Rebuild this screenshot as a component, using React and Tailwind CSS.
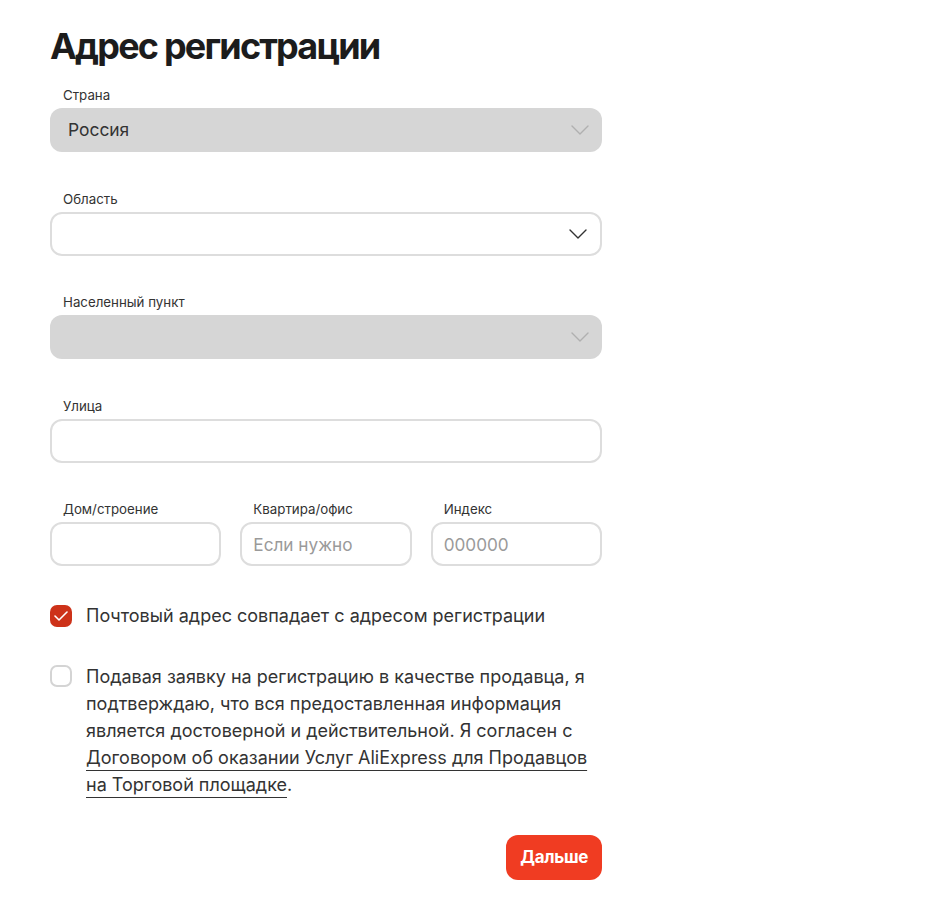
import React, { useState } from 'react';

const Chevron = ({ light }) => (
  <svg
    width="18"
    height="10"
    viewBox="0 0 18 10"
    fill="none"
    className="absolute right-[13px] top-1/2 -translate-y-1/2"
  >
    <path
      d="M1 1l8 8 8-8"
      stroke={light ? '#b0b0b0' : '#333333'}
      strokeWidth="1.4"
      strokeLinecap="round"
      strokeLinejoin="round"
    />
  </svg>
);

const Label = ({ children }) => (
  <div className="pl-[13px] text-[13.3px] leading-[18px] text-[#333] mb-[4px]">{children}</div>
);

const SelectField = ({ label, value, disabled, className }) => (
  <div className={className}>
    <Label>{label}</Label>
    <div
      className={
        disabled
          ? 'relative h-[44px] rounded-[12px] bg-[#d6d6d6] flex items-center px-[18px] text-[17.4px] text-[#333]'
          : 'relative h-[44px] rounded-[12px] border-2 border-[#dddddd] bg-white flex items-center px-[16px] text-[17.4px] text-[#333]'
      }
    >
      {value}
      <Chevron light={disabled} />
    </div>
  </div>
);

const TextField = ({ label, placeholder }) => (
  <div>
    <Label>{label}</Label>
    <input
      type="text"
      placeholder={placeholder}
      className="w-full h-[44px] rounded-[12px] border-2 border-[#dddddd] bg-white px-[11px] text-[17.2px] text-[#333] placeholder:text-[#9a9a9a] outline-none"
    />
  </div>
);

const CheckIcon = () => (
  <svg width="14" height="10" viewBox="0 0 14 10" fill="none">
    <path d="M1 5l4 4 8-8" stroke="white" strokeWidth="1.6" strokeLinecap="round" strokeLinejoin="round" />
  </svg>
);

const App = () => {
  const [postal, setPostal] = useState(true);
  const [agree, setAgree] = useState(false);

  return (
    <div className="min-h-screen bg-white" style={{ fontFamily: 'Inter, "Noto Sans", sans-serif' }}>
      <div className="w-[552px] ml-[50px] pt-[26px] pb-[23px]">
        <h1 className="text-[36px] leading-[40px] font-bold tracking-[-0.05em] text-[#1c1c1c] mb-[20px]">
          Адрес регистрации
        </h1>

        <SelectField label="Страна" value="Россия" disabled className="mb-[38px]" />
        <SelectField label="Область" value="" className="mb-[37px]" />
        <SelectField label="Населенный пункт" value="" disabled className="mb-[38px]" />

        <div className="mb-[37px]">
          <TextField label="Улица" />
        </div>

        <div className="grid grid-cols-3 gap-[19px]">
          <TextField label="Дом/строение" />
          <TextField label="Квартира/офис" placeholder="Если нужно" />
          <TextField label="Индекс" placeholder="000000" />
        </div>

        <label className="flex items-center gap-[14px] mt-[36px] cursor-pointer">
          <button
            type="button"
            onClick={() => setPostal(!postal)}
            className={
              postal
                ? 'w-[22px] h-[22px] shrink-0 rounded-[7px] bg-[#cd3219] flex items-center justify-center'
                : 'w-[22px] h-[22px] shrink-0 rounded-[7px] border-2 border-[#d4d4d4] bg-white'
            }
          >
            {postal && <CheckIcon />}
          </button>
          <span className="text-[18px] leading-[27px] text-[#333]">
            Почтовый адрес совпадает с адресом регистрации
          </span>
        </label>

        <div className="flex items-start gap-[14px] mt-[34px]">
          <button
            type="button"
            onClick={() => setAgree(!agree)}
            className={
              agree
                ? 'w-[22px] h-[22px] mt-[2px] shrink-0 rounded-[7px] bg-[#cd3219] flex items-center justify-center'
                : 'w-[22px] h-[22px] mt-[2px] shrink-0 rounded-[7px] border-2 border-[#d4d4d4] bg-white'
            }
          >
            {agree && <CheckIcon />}
          </button>
          <p className="text-[18px] leading-[27px] text-[#333] pr-[10px]">
            Подавая заявку на регистрацию в качестве продавца, я подтверждаю, что вся предоставленная
            информация является достоверной и действительной. Я согласен с{' '}
            <a href="#" className="underline decoration-[#333] underline-offset-[6px]">
              Договором об оказании Услуг AliExpress для Продавцов на Торговой площадке
            </a>
            .
          </p>
        </div>

        <div className="flex justify-end mt-[37px]">
          <button
            type="button"
            className="h-[45px] px-[14px] rounded-[12px] bg-[#f03c22] text-white text-[17px] font-bold tracking-[-0.02em]"
          >
            Дальше
          </button>
        </div>
      </div>
    </div>
  );
};

export default App;
